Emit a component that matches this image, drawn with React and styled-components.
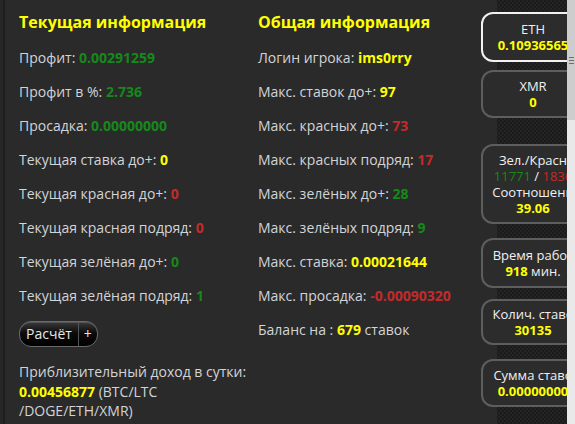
import React from 'react';
import styled, { createGlobalStyle } from 'styled-components';

const GlobalStyle = createGlobalStyle`
  html, body {
    margin: 0;
    padding: 0;
    background: #2a2a2a;
  }
  body {
    font-family: "Open Sans", "Liberation Sans", sans-serif;
  }
`;

const Page = styled.div`
  display: flex;
  width: 575px;
  height: 424px;
  overflow: hidden;
  background: #2a2a2a;
  color: #d2d4d8;
  font-size: 14px;
`;

const Edge = styled.div`
  width: 3px;
  flex: none;
  background: #262626;
  border-right: 2px solid #1d1d1d;
`;

const Column = styled.div`
  width: ${p => p.$width}px;
  flex: none;
  padding-left: ${p => p.$pad}px;
  box-sizing: border-box;
`;

const Heading = styled.h2`
  margin: 11px 0 15px;
  font-size: 16px;
  line-height: 22px;
  font-weight: 700;
  color: #ffff00;
  white-space: nowrap;
`;

const Row = styled.div`
  line-height: 20px;
  margin-bottom: 14px;
  white-space: nowrap;
`;

const colors = {
  green: '#15891a',
  red: '#c42a2a',
  yellow: '#ffff00',
};

const Value = styled.b`
  font-weight: 700;
  color: ${p => colors[p.$c]};
`;

const Tint = styled.span`
  color: ${p => colors[p.$c]};
`;

const ButtonGroup = styled.div`
  display: inline-flex;
  height: 24px;
  margin-top: 1px;
  border-radius: 12px;
  border: 1px solid #6a6a6a;
  background: linear-gradient(#3a3a3a 0%, #0c0c0c 45%, #000 100%);
  box-shadow: inset 0 1px 0 rgba(255,255,255,0.15);
  overflow: hidden;
`;

const GroupButton = styled.button`
  border: none;
  background: transparent;
  color: #e8e8e8;
  font-family: "Open Sans", "Liberation Sans", sans-serif;
  font-size: 14px;
  line-height: 22px;
  padding: 0 ${p => p.$pad}px;
  cursor: pointer;
  & + & {
    border-left: 1px solid #555;
  }
`;

const Estimate = styled.div`
  margin-top: 15px;
  line-height: 19.5px;
  width: 240px;
`;

const Side = styled.div`
  width: 97px;
  flex: none;
  overflow: hidden;
  padding: 12px 0 0 11px;
  box-sizing: border-box;
  background:
    linear-gradient(90deg, #2a2a2a 0, #2a2a2a 27px, transparent 27px),
    repeating-conic-gradient(#1b1b1b 0 25%, #242424 0 50%) 0 0 / 4px 4px;
`;

const Card = styled.div`
  width: 104px;
  margin-top: ${p => p.$gap}px;
  padding: ${p => p.$padY}px 0;
  box-sizing: border-box;
  border: 2px solid ${p => (p.$active ? '#f2f2f2' : '#5e5e5e')};
  border-radius: 12px;
  background: #2c2c2c;
  text-align: center;
  color: #f0f0f0;
  font-size: 13px;
  line-height: 16px;
  white-space: nowrap;
`;

const Scroll = styled.div`
  width: 8px;
  flex: none;
  background: #e9e9e9;
  display: flex;
  flex-direction: column;
`;

const Thumb = styled.div`
  height: 120px;
  background: #cdcdcd;
  display: flex;
  align-items: center;
  padding-left: 2px;
`;

const Grip = styled.div`
  width: 5px;
  height: 5px;
  border-top: 1px solid #6f6f6f;
  border-bottom: 1px solid #6f6f6f;
  position: relative;
  &::after {
    content: '';
    position: absolute;
    left: 0;
    right: 0;
    top: 2px;
    border-top: 1px solid #6f6f6f;
  }
`;

const current = [
  ['Профит: ', '0.00291259', 'green'],
  ['Профит в %: ', '2.736', 'green'],
  ['Просадка: ', '0.00000000', 'green'],
  ['Текущая ставка до+: ', '0', 'yellow'],
  ['Текущая красная до+: ', '0', 'red'],
  ['Текущая красная подряд: ', '0', 'red'],
  ['Текущая зелёная до+: ', '0', 'green'],
  ['Текущая зелёная подряд: ', '1', 'green'],
];

const general = [
  ['Логин игрока: ', 'ims0rry', 'yellow'],
  ['Макс. ставок до+: ', '97', 'yellow'],
  ['Макс. красных до+: ', '73', 'red'],
  ['Макс. красных подряд: ', '17', 'red'],
  ['Макс. зелёных до+: ', '28', 'green'],
  ['Макс. зелёных подряд: ', '9', 'green'],
  ['Макс. ставка: ', '0.00021644', 'yellow'],
  ['Макс. просадка: ', '-0.00090320', 'red'],
];

export default function App() {
  return (
    <>
      <GlobalStyle />
      <Page>
        <Edge />
        <Column $width={253} $pad={14}>
          <Heading>Текущая информация</Heading>
          {current.map(([label, val, c]) => (
            <Row key={label}>
              {label}<Value $c={c}>{val}</Value>
            </Row>
          ))}
          <ButtonGroup>
            <GroupButton $pad={6}>Расчёт</GroupButton>
            <GroupButton $pad={5}>+</GroupButton>
          </ButtonGroup>
          <Estimate>
            Приблизительный доход в сутки:<br />
            <Value $c="yellow">0.00456877</Value> (BTC/LTC<br />
            /DOGE/ETH/XMR)
          </Estimate>
        </Column>
        <Column $width={212} $pad={0}>
          <Heading>Общая информация</Heading>
          {general.map(([label, val, c]) => (
            <Row key={label}>
              {label}<Value $c={c}>{val}</Value>
            </Row>
          ))}
          <Row>
            Баланс на : <Value $c="yellow">679</Value> ставок
          </Row>
        </Column>
        <Side>
          <Card $active $gap={0} $padY={7}>
            ETH<br /><Value $c="yellow">0.10936565</Value>
          </Card>
          <Card $gap={8} $padY={6}>
            XMR<br /><Value $c="yellow">0</Value>
          </Card>
          <Card $gap={26} $padY={6}>
            Зел./Красн<br />
            <Tint $c="green">11771</Tint> / <Tint $c="red">1836</Tint><br />
            Соотношени<br />
            <Value $c="yellow">39.06</Value>
          </Card>
          <Card $gap={14} $padY={7}>
            Время работ<br />
            <Value $c="yellow">918</Value> мин.
          </Card>
          <Card $gap={11} $padY={5}>
            Колич. ставо<br /><Value $c="yellow">30135</Value>
          </Card>
          <Card $gap={14} $padY={6}>
            Сумма ставо<br /><Value $c="yellow">0.00000000</Value>
          </Card>
        </Side>
        <Scroll>
          <Thumb><Grip /></Thumb>
        </Scroll>
      </Page>
    </>
  );
}
